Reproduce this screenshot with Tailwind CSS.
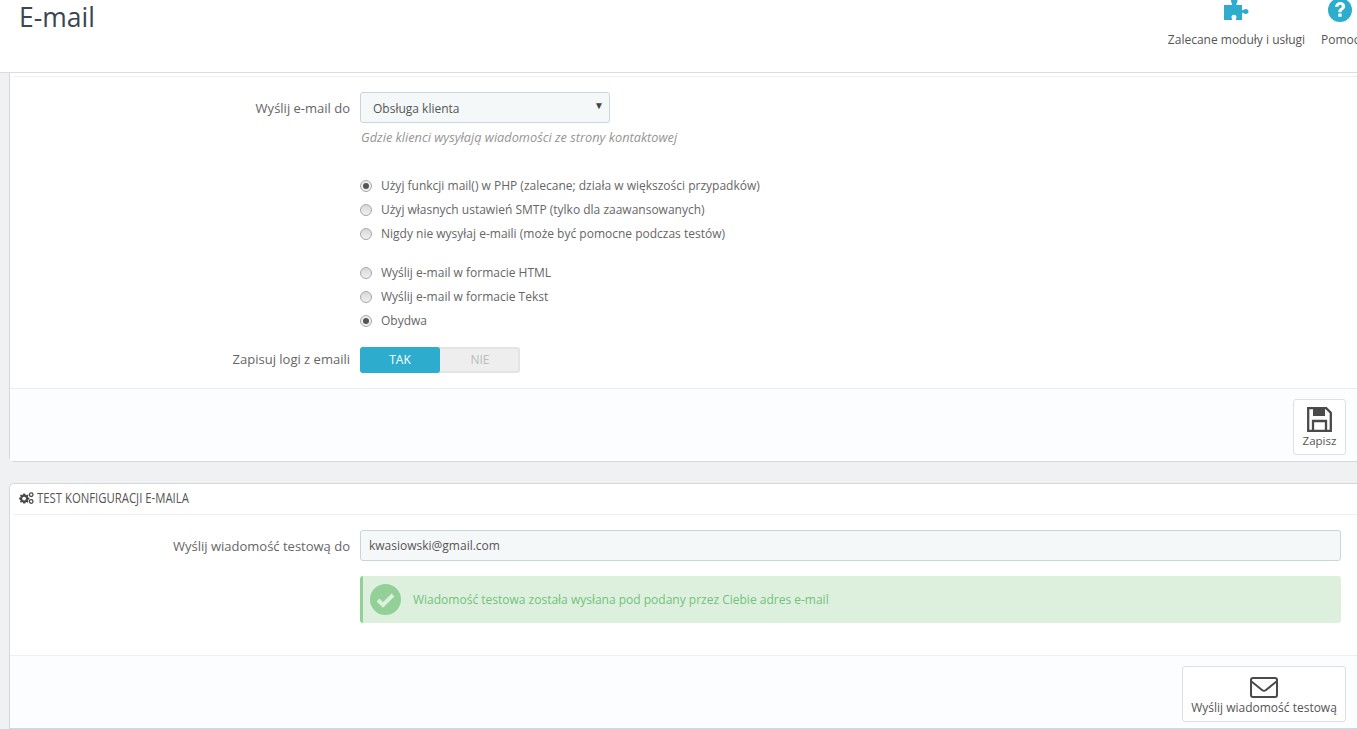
<!DOCTYPE html>
<html lang="pl">
<head>
    <meta charset="UTF-8">
    <title>E-mail</title>
    <script src="https://cdn.jsdelivr.net/npm/@tailwindcss/browser@4"></script>
</head>
<body class="bg-[#eff1f2] font-['Open_Sans',sans-serif] text-[12px] text-[#666]">
<div class="w-[1357px] h-[729px] overflow-hidden">

    <!-- page head -->
    <div class="h-[73px] bg-white border-b border-[#dcdcdc] flex justify-between">
        <h1 class="pl-[19px] text-[26.5px] leading-[34px] text-[#3c4650] font-normal">E-mail</h1>
        <div class="flex shrink-0 w-[189px] overflow-hidden">
            <div class="w-[137px] mr-[16px] shrink-0 flex flex-col items-center">
                <svg class="w-[28px] h-[22px] -mt-[1px]" viewBox="0 0 28 22" fill="#2eacce"><path d="M1 6h7.500c.8 0 .8-.7.4-1.400C8.300 3.600 8 3 8 2c0-1.500 1.500-2.500 3.300-2.500S14.500.5 14.500 2c0 1-.3 1.600-.9 2.600-.4.700-.4 1.400.4 1.400H19v4.500c0 .8.700.8 1.400.4.800-.5 1.500-.9 2.400-.9 1.700 0 2.700 1.300 2.700 2.500s-1 2.500-2.700 2.500c-.9 0-1.600-.4-2.400-.9-.7-.4-1.400-.4-1.400.4V21h-5.500c-.8 0-.9-.6-.6-1.100.4-.7.600-1.200.6-1.900 0-1.400-1.200-2.200-2.500-2.200S8.500 16.600 8.500 18c0 .7.200 1.200.6 1.900.3.500.2 1.100-.6 1.100H1z"/></svg>
                <span class="mt-[11px] leading-[16px] text-[#555] whitespace-nowrap">Zalecane moduły i usługi</span>
            </div>
            <div class="shrink-0 flex flex-col items-center w-[36px]">
                <svg class="w-[24px] h-[24px] -mt-[2px] ml-[1px] shrink-0" viewBox="0 0 24 24"><circle cx="12" cy="12" r="12" fill="#2eacce"/><path d="M7 8.800C7.400 5.900 9.500 4 12.200 4c2.900 0 5 1.800 5 4.300 0 1.900-1.100 2.900-2.300 3.800-1 .7-1.300 1.100-1.300 2.100h-3.200c-.1-2 .6-3 1.800-3.900 1-.7 1.600-1.100 1.600-1.900 0-.9-.7-1.400-1.600-1.400-1.100 0-1.700.6-1.900 1.700zM10.300 15.500h3.300v3.300h-3.300z" fill="#fff"/></svg>
                <span class="mt-[10px] leading-[16px] text-[#555] whitespace-nowrap self-start">Pomoc</span>
            </div>
        </div>
    </div>

    <!-- smtp panel -->
    <div class="ml-[9px] w-[1400px] h-[389px] bg-white border-l border-b border-[#d3d8db] rounded-bl-[5px] flex flex-col">
        <div class="mx-[4px] mt-[3px] border-t border-[#eee]"></div>
        <div class="flex-1 pt-[15px]">
            <div class="flex">
                <label class="w-[340px] text-right text-[13px] leading-[32px]">Wyślij e-mail do</label>
                <div class="ml-[10px]">
                    <div class="w-[250px] h-[31px] rounded-[3px] border border-[#c7d6db] bg-[#f5f8f9] flex items-center justify-between pl-[12px] pr-[5px] text-[#555] text-[12px]">
                        <span class="mt-[2px]">Obsługa klienta</span>
                        <span class="text-[10px] text-[#444] -mt-[5px]">▼</span>
                    </div>
                    <p class="mt-[6px] italic text-[#959595] text-[12.75px] leading-[16px] pl-[1px]">Gdzie klienci wysyłają wiadomości ze strony kontaktowej</p>
                </div>
            </div>

            <div class="ml-[350px] mt-[33px] flex flex-col gap-[8px] leading-[16px]">
                <label class="flex items-center gap-[9px] h-[16px]">
                    <span class="w-[12px] h-[12px] rounded-full border border-[#a8a8a8] bg-[#eee] flex items-center justify-center"><span class="w-[6px] h-[6px] rounded-full bg-[#555]"></span></span>
                    Użyj funkcji mail() w PHP (zalecane; działa w większości przypadków)
                </label>
                <label class="flex items-center gap-[9px] h-[16px]">
                    <span class="w-[12px] h-[12px] rounded-full border border-[#a8a8a8] bg-linear-to-b from-[#d8d8d8] to-[#f0f0f0]"></span>
                    Użyj własnych ustawień SMTP (tylko dla zaawansowanych)
                </label>
                <label class="flex items-center gap-[9px] h-[16px]">
                    <span class="w-[12px] h-[12px] rounded-full border border-[#a8a8a8] bg-linear-to-b from-[#d8d8d8] to-[#f0f0f0]"></span>
                    Nigdy nie wysyłaj e-maili (może być pomocne podczas testów)
                </label>
            </div>

            <div class="ml-[350px] mt-[23px] flex flex-col gap-[8px] leading-[16px]">
                <label class="flex items-center gap-[9px] h-[16px]">
                    <span class="w-[12px] h-[12px] rounded-full border border-[#a8a8a8] bg-linear-to-b from-[#d8d8d8] to-[#f0f0f0]"></span>
                    Wyślij e-mail w formacie HTML
                </label>
                <label class="flex items-center gap-[9px] h-[16px]">
                    <span class="w-[12px] h-[12px] rounded-full border border-[#a8a8a8] bg-linear-to-b from-[#d8d8d8] to-[#f0f0f0]"></span>
                    Wyślij e-mail w formacie Tekst
                </label>
                <label class="flex items-center gap-[9px] h-[16px]">
                    <span class="w-[12px] h-[12px] rounded-full border border-[#a8a8a8] bg-[#eee] flex items-center justify-center"><span class="w-[6px] h-[6px] rounded-full bg-[#555]"></span></span>
                    Obydwa
                </label>
            </div>

            <div class="flex mt-[18px] items-center">
                <label class="w-[340px] text-right text-[13px]">Zapisuj logi z emaili</label>
                <div class="ml-[10px] w-[160px] h-[26px] flex rounded-[3px] bg-[#eee] border-2 border-[#e4e4e4] text-[12px]">
                    <span class="-m-[2px] w-[80px] bg-[#2eacce] rounded-[3px] text-white flex items-center justify-center">TAK</span>
                    <span class="flex-1 pl-[4px] text-[#bbb] flex items-center justify-center">NIE</span>
                </div>
            </div>
        </div>
        <div class="h-[73px] border-t border-[#eee] bg-[#fcfdfe] pl-[1283px] pt-[10px]">
            <button class="w-[53px] h-[56px] bg-white border border-[#e0e0e0] rounded-[3px] flex flex-col items-center pt-[7px] text-[#555] text-[11.500px]">
                <svg class="w-[25px] h-[25px]" viewBox="0 0 25 25" fill="none" stroke="#4a4a4a" stroke-width="2.300"><path d="M1.200 1.200h18l4.600 4.600v18H1.200z"/><path d="M6 1.500v7.500h12V1.500" fill="#4a4a4a" stroke="none"/><path d="M6 23.500V14h13v9.500"/></svg>
                <span class="leading-[16px] mt-[1px]">Zapisz</span>
            </button>
        </div>
    </div>

    <!-- test panel -->
    <div class="mt-[21px] ml-[9px] w-[1400px] h-[246px] bg-white border border-r-0 border-[#d3d8db] rounded-t-[5px] flex flex-col">
        <div class="mx-[4px] h-[31px] border-b border-[#eee] flex items-center pl-[5px] gap-[3px] text-[#555]">
            <svg class="w-[15px] h-[12px] -mt-[2px]" viewBox="0 0 15 12" fill="#4a4a4a"><path d="M5 1.500l1.200.2.400 1.100.9.400 1-.6 1 1-.6 1 .4.900 1.100.4v1.500l-1.100.4-.4.900.6 1-1 1-1-.6-.9.400-.4 1.100H4.300l-.4-1.100-.9-.4-1 .6-1-1 .6-1-.4-.9L.1 7.300V5.800l1.100-.4.400-.9-.6-1 1-1 1 .6.900-.4.400-1.100zm.1 3.200a1.900 1.900 0 100 3.800 1.900 1.900 0 000-3.800z"/><circle cx="12.200" cy="2.700" r="1.800" fill="none" stroke="#4a4a4a" stroke-width="1.300"/><circle cx="12.200" cy="9.500" r="1.800" fill="none" stroke="#4a4a4a" stroke-width="1.300"/></svg>
            <span class="inline-block -mt-[3px] origin-left scale-x-[0.81] whitespace-nowrap text-[14px] font-normal">TEST KONFIGURACJI E-MAILA</span>
        </div>
        <div class="flex-1 pt-[15px]">
            <div class="flex">
                <label class="w-[340px] text-right text-[13px] leading-[32px]">Wyślij wiadomość testową do</label>
                <input value="kwasiowski@gmail.com" class="ml-[10px] w-[981px] h-[31px] rounded-[3px] border border-[#c7d6db] bg-[#f5f8f9] px-[8px] text-[#555] text-[12px]">
            </div>
            <div class="ml-[350px] mt-[14px] w-[981px] h-[47px] rounded-[3px] bg-[#ddf0de] border-l-[3px] border-[#92d097] flex items-center pl-[7px] gap-[12px] text-[#72c279] text-[12px]">
                <svg class="w-[31px] h-[31px]" viewBox="0 0 31 31"><circle cx="15.500" cy="15.500" r="15.500" fill="#92d097"/><path d="M8 16l5 5 10-10" fill="none" stroke="#ddf0de" stroke-width="4"/></svg>
                <span>Wiadomość testowa została wysłana pod podany przez Ciebie adres e-mail</span>
            </div>
        </div>
        <div class="h-[73px] border-t border-[#eee] bg-[#fcfdfe] pl-[1172px] pt-[10px]">
            <button class="w-[164px] h-[56px] bg-white border border-[#e0e0e0] rounded-[3px] flex flex-col items-center pt-[10px] text-[#555] text-[12px]">
                <svg class="w-[28px] h-[21px]" viewBox="0 0 28 21" fill="none" stroke="#4a4a4a" stroke-width="2"><rect x="1" y="1" width="26" height="19" rx="2"/><path d="M1.500 4.500L12 13q2 1.500 4 0L26.500 4.500"/></svg>
                <span class="leading-[16px] mt-[2px] whitespace-nowrap">Wyślij wiadomość testową</span>
            </button>
        </div>
    </div>
</div>
</body>
</html>
